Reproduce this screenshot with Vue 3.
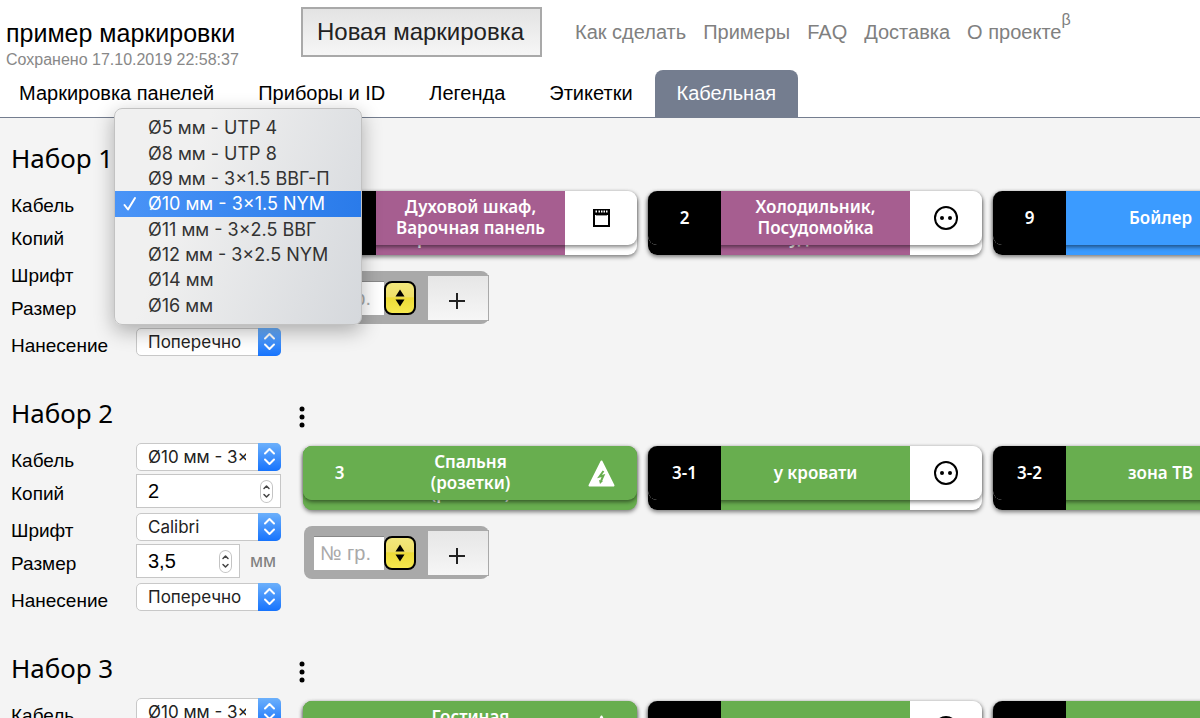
<script setup>
import { ref } from 'vue'

const pages = ['Как сделать', 'Примеры', 'FAQ', 'Доставка', 'О проекте']
const tabs = ['Маркировка панелей', 'Приборы и ID', 'Легенда', 'Этикетки', 'Кабельная']
const activeTab = ref('Кабельная')

const cables = [
  'Ø5 мм - UTP 4',
  'Ø8 мм - UTP 8',
  'Ø9 мм - 3×1.5 ВВГ-П',
  'Ø10 мм - 3×1.5 NYM',
  'Ø11 мм - 3×2.5 ВВГ',
  'Ø12 мм - 3×2.5 NYM',
  'Ø14 мм',
  'Ø16 мм',
]
const fonts = ['Calibri', 'Arial']
const directions = ['Поперечно', 'Вдоль']

const makeSet = (id, cards, menuOpen = false) => ({
  id,
  cards,
  menuOpen,
  cable: cables[3],
  copies: '2',
  font: 'Calibri',
  size: '3,5',
  direction: 'Поперечно',
})

const sets = ref([
  makeSet(1, [
    { num: '', lines: ['Духовой шкаф,', 'Варочная панель'], color: 'purple', icon: 'oven' },
    { num: '2', lines: ['Холодильник,', 'Посудомойка'], color: 'purple', icon: 'socket' },
    { num: '9', lines: ['Бойлер'], color: 'blue', icon: 'socket' },
  ], true),
  makeSet(2, [
    { num: '3', lines: ['Спальня', '(розетки)'], color: 'green', icon: 'danger', solid: true },
    { num: '3-1', lines: ['у кровати'], color: 'green', icon: 'socket' },
    { num: '3-2', lines: ['зона ТВ'], color: 'green', icon: 'socket' },
  ]),
  makeSet(3, [
    { num: '', lines: ['Гостиная', ''], color: 'green', icon: 'danger', solid: true },
    { num: '', lines: [''], color: 'green', icon: 'socket' },
    { num: '', lines: [''], color: 'green', icon: 'socket' },
  ]),
])

function pickCable(set, cable) {
  set.cable = cable
  set.menuOpen = false
}
</script>

<template>
  <div class="app">
    <header class="header">
      <div class="top">
        <div class="project">
          <h1>пример маркировки</h1>
          <p>Сохранено 17.10.2019 22:58:37</p>
        </div>
        <button class="new-button" type="button">Новая маркировка</button>
        <nav class="pages">
          <a v-for="page in pages" :key="page" href="#">{{ page }}</a>
          <sup>β</sup>
        </nav>
      </div>
      <nav class="tabs">
        <a
          v-for="tab in tabs"
          :key="tab"
          href="#"
          :class="{ active: tab === activeTab }"
          @click.prevent="activeTab = tab"
        >{{ tab }}</a>
      </nav>
    </header>

    <main>
      <section v-for="set in sets" :key="set.id" class="set">
        <div class="settings">
          <h2>Набор {{ set.id }}</h2>

          <div class="row">
            <label :for="`cable-${set.id}`">Кабель</label>
            <div class="select">
              <select :id="`cable-${set.id}`" v-model="set.cable">
                <option v-for="c in cables" :key="c">{{ c }}</option>
              </select>
              <span class="arrows"><svg viewBox="0 0 23 28"><path d="M7 10.500 L11.500 6 L16 10.500 M7 16.500 L11.500 21 L16 16.500" /></svg></span>
            </div>
            <ul v-if="set.menuOpen" class="menu" role="listbox" aria-label="Кабель">
              <li
                v-for="c in cables"
                :key="c"
                role="option"
                :aria-selected="c === set.cable"
                :class="{ chosen: c === set.cable }"
                @click="pickCable(set, c)"
              >
                <svg v-if="c === set.cable" class="check" viewBox="0 0 14 16"><path d="M1.500 9 L5 13.500 L12 2" /></svg>
                {{ c }}
              </li>
            </ul>
          </div>

          <div class="row tall">
            <label :for="`copies-${set.id}`">Копий</label>
            <div class="number">
              <input :id="`copies-${set.id}`" v-model="set.copies" type="text" inputmode="numeric">
              <span class="stepper"><svg viewBox="0 0 13 23"><path d="M4 8.500 L6.500 6 L9 8.500 M4 14.500 L6.500 17 L9 14.500" /></svg></span>
            </div>
          </div>

          <div class="row">
            <label :for="`font-${set.id}`">Шрифт</label>
            <div class="select">
              <select :id="`font-${set.id}`" v-model="set.font">
                <option v-for="f in fonts" :key="f">{{ f }}</option>
              </select>
              <span class="arrows"><svg viewBox="0 0 23 28"><path d="M7 10.500 L11.500 6 L16 10.500 M7 16.500 L11.500 21 L16 16.500" /></svg></span>
            </div>
          </div>

          <div class="row tall">
            <label :for="`size-${set.id}`">Размер</label>
            <div class="number short">
              <input :id="`size-${set.id}`" v-model="set.size" type="text" inputmode="decimal">
              <span class="stepper"><svg viewBox="0 0 13 23"><path d="M4 8.500 L6.500 6 L9 8.500 M4 14.500 L6.500 17 L9 14.500" /></svg></span>
            </div>
            <span class="unit">мм</span>
          </div>

          <div class="row">
            <label :for="`dir-${set.id}`">Нанесение</label>
            <div class="select">
              <select :id="`dir-${set.id}`" v-model="set.direction">
                <option v-for="d in directions" :key="d">{{ d }}</option>
              </select>
              <span class="arrows"><svg viewBox="0 0 23 28"><path d="M7 10.500 L11.500 6 L16 10.500 M7 16.500 L11.500 21 L16 16.500" /></svg></span>
            </div>
          </div>
        </div>

        <div class="content">
          <button class="more" type="button" aria-label="Ещё">
            <svg viewBox="0 0 6 24"><circle cx="3" cy="4" r="2.500" /><circle cx="3" cy="12" r="2.500" /><circle cx="3" cy="20" r="2.500" /></svg>
          </button>

          <div class="cards">
            <article v-for="(card, i) in set.cards" :key="i" class="card">
              <div class="layer back" :class="[card.color, { solid: card.solid }]" aria-hidden="true">
                <div class="num"></div>
                <div class="name">
                  <template v-if="card.lines.length > 1">
                    <span v-for="line in card.lines" :key="line">{{ line }}</span>
                  </template>
                </div>
                <div class="icon"></div>
              </div>
              <div class="layer front" :class="[card.color, { solid: card.solid }]">
                <div class="num">{{ card.num }}</div>
                <div class="name"><span v-for="line in card.lines" :key="line">{{ line }}</span></div>
                <div class="icon">
                  <svg v-if="card.icon === 'oven'" class="oven" viewBox="0 0 17 18">
                    <path fill-rule="evenodd" d="M0 0H17V18H0Z M2 6V16H15V6Z" />
                    <path class="light" d="M2.500 1.500h1.500v2h-1.500z M5.500 1.500h1.500v2h-1.500z M8 1.500h1.500v2h-1.500z M10.500 1.500h1.500v2h-1.500z M13 1.500h1.500v2h-1.500z" />
                    <path class="handle" d="M3 6h11v1h-11z" />
                  </svg>
                  <svg v-else-if="card.icon === 'socket'" class="socket" viewBox="0 0 24 24">
                    <circle class="ring" cx="12" cy="12" r="11" />
                    <circle cx="8" cy="12" r="2" /><circle cx="16" cy="12" r="2" />
                  </svg>
                  <svg v-else class="danger" viewBox="0 0 27 27">
                    <path class="light" d="M13.500 1.500 L25.500 25.500 H1.500 Z" stroke="#fff" stroke-width="2" stroke-linejoin="round" />
                    <path class="bolt" d="M15.500 11 L11.500 16.500 L15.500 15.500 L13 21" />
                    <path class="tip" d="M11 20 L12 24 L15 21 Z" />
                  </svg>
                </div>
              </div>
            </article>
          </div>

          <form class="add" @submit.prevent>
            <input type="text" placeholder="№ гр." aria-label="№ гр.">
            <button class="picker" type="button" aria-label="Выбрать группу">
              <svg viewBox="0 0 10 18"><path d="M5 0.500 L9.500 7.500 H0.500 Z M5 17.500 L9.500 10.500 H0.500 Z" /></svg>
            </button>
            <button class="plus" type="submit" aria-label="Добавить">
              <svg viewBox="0 0 18 18"><path d="M9 1 V17 M1 9 H17" /></svg>
            </button>
          </form>
        </div>
      </section>
    </main>
  </div>
</template>

<style>
body {
  margin: 0;
  background: #f4f4f4;
}
</style>

<style scoped>
* {
  box-sizing: border-box;
}
.app {
  height: 100vh;
  overflow: hidden;
  background: #f4f4f4;
  color: #000;
  font-family: "Liberation Sans", Arial, sans-serif;
}
h1, h2, p, ul {
  margin: 0;
  padding: 0;
  font-weight: 400;
}
a {
  text-decoration: none;
}
svg {
  display: block;
}

/* header */
.header {
  background: #fff;
  border-bottom: 1px solid #747d8f;
}
.top {
  display: flex;
  align-items: flex-start;
  height: 70px;
  padding-left: 6px;
}
.project {
  width: 295px;
  padding-top: 18px;
}
.project h1 {
  font-size: 25px;
  line-height: 30px;
}
.project p {
  color: #888;
  font-size: 16px;
  line-height: 24px;
}
.new-button {
  height: 50px;
  margin: 7px 33px 0 0;
  padding: 0 15px 0 13px;
  border: 2px solid #a9a9a9;
  background: linear-gradient(#e3e3e3, #f6f6f6);
  color: #222;
  font-family: inherit;
  font-size: 24px;
  min-width: 241px;
  white-space: nowrap;
}
.pages {
  display: flex;
  padding-top: 20px;
  font-size: 20px;
  line-height: 24px;
  white-space: nowrap;
}
.pages a {
  margin-right: 17px;
  color: #808080;
}
.pages a:last-of-type {
  margin-right: 0;
}
.pages sup {
  margin-top: -12px;
  color: #808080;
  font-size: 16px;
}
.tabs {
  display: flex;
  height: 47px;
  margin-left: -3px;
}
.tabs a {
  padding: 0 22px;
  border-radius: 8px 8px 0 0;
  color: #000;
  font-size: 20px;
  line-height: 47px;
  white-space: nowrap;
}
.tabs .active {
  background: #747d8f;
  color: #fff;
}

/* set */
.set {
  display: flex;
  height: 255px;
}
.settings {
  flex: none;
  width: 303px;
  padding-left: 11px;
}
h2 {
  height: 70px;
  padding-top: 22px;
  font-family: "Noto Sans", "Open Sans", sans-serif;
  font-size: 26px;
  line-height: 36px;
}
.row {
  position: relative;
  display: flex;
  align-items: flex-start;
  height: 31px;
}
.row.tall {
  height: 39px;
}
label {
  width: 125px;
  font-size: 19px;
  line-height: 35px;
}
.tall label {
  line-height: 39px;
}
.select {
  position: relative;
  width: 145px;
  height: 28px;
}
select {
  display: block;
  width: 100%;
  height: 100%;
  padding: 0 34px 0 11px;
  border: 1px solid #c8c8c8;
  border-radius: 5px;
  background: #fff;
  color: #222;
  font-family: Inter, sans-serif;
  font-size: 17px;
  appearance: none;
}
.arrows {
  position: absolute;
  top: 0;
  right: 0;
  width: 23px;
  height: 28px;
  border-radius: 0 5px 5px 0;
  background: linear-gradient(#6cb0fb, #1673fd);
  pointer-events: none;
}
.arrows path {
  fill: none;
  stroke: #fff;
  stroke-width: 2;
  stroke-linecap: round;
  stroke-linejoin: round;
}
.number {
  position: relative;
  width: 145px;
  height: 34px;
}
.number.short {
  width: 104px;
}
.number input {
  display: block;
  width: 100%;
  height: 100%;
  padding: 0 30px 0 11px;
  border: 1px solid #c6c6c6;
  background: #fff;
  color: #000;
  font-family: inherit;
  font-size: 20px;
}
.stepper {
  position: absolute;
  top: 6px;
  right: 8px;
  width: 13px;
  height: 23px;
  border-radius: 7px;
  background: #fff;
  box-shadow: inset 0 0 0 1px #c4c4c4;
}
.stepper path {
  fill: none;
  stroke: #444;
  stroke-width: 1.5;
  stroke-linecap: round;
  stroke-linejoin: round;
}
.unit {
  margin-left: 10px;
  color: #808080;
  font-size: 19px;
  line-height: 34px;
}

/* cable menu */
.menu {
  position: absolute;
  z-index: 5;
  top: -80px;
  left: 103px;
  display: grid;
  grid-template-rows: repeat(8, 1fr);
  width: 248px;
  height: 217px;
  padding: 6px 0;
  border: 1px solid #c2c2c2;
  border-radius: 8px;
  background: linear-gradient(110deg, #f0f0f0 30%, #d5d8dc);
  box-shadow: 0 6px 20px rgba(0, 0, 0, 0.3);
  list-style: none;
}
.menu li {
  position: relative;
  display: flex;
  align-items: center;
  padding-left: 33px;
  color: #333;
  font-family: Inter, sans-serif;
  font-size: 18px;
  line-height: 25px;
  white-space: nowrap;
}
.menu .chosen {
  background: linear-gradient(90deg, #4a94f7, #2a7bea);
  color: #fff;
}
.check {
  position: absolute;
  left: 8px;
  width: 14px;
  height: 16px;
}
.check path {
  fill: none;
  stroke: #fff;
  stroke-width: 2;
  stroke-linecap: round;
  stroke-linejoin: round;
}

/* cards */
.content {
  flex: 1;
  min-width: 0;
}
.more {
  display: block;
  width: 6px;
  height: 24px;
  margin: 32px 0 17px -4px;
  padding: 0;
  border: 0;
  background: none;
}
.cards {
  display: flex;
  gap: 11px;
}
.card {
  position: relative;
  flex: none;
  width: 334px;
  height: 64px;
}
.layer {
  display: flex;
  overflow: hidden;
  border-radius: 9px;
  background: #fff;
  box-shadow: 0 2px 4px rgba(0, 0, 0, 0.5);
  color: #fff;
  font-family: "Noto Sans", "Open Sans", sans-serif;
  font-size: 17px;
  font-weight: 600;
  line-height: 21px;
}
.back {
  height: 64px;
}
.back .name {
  padding-top: 10px;
}
.front {
  position: absolute;
  inset: 0 0 10px;
}
.num,
.name,
.icon {
  display: flex;
  flex-direction: column;
  align-items: center;
  justify-content: center;
}
.num {
  width: 73px;
  padding-bottom: 2px;
  background: #000;
}
.name {
  flex: 1;
  padding-bottom: 2px;
}
.name span {
  min-height: 21px;
  white-space: nowrap;
}
.icon {
  width: 72px;
}
.purple .name {
  background: #a65e90;
}
.blue .name {
  background: #3b9bff;
}
.green .name,
.solid,
.solid .num {
  background: #68ae4f;
}
.oven {
  width: 17px;
  height: 18px;
}
.handle {
  fill: #999;
}
.socket {
  width: 24px;
  height: 24px;
}
.ring {
  fill: none;
  stroke: #000;
  stroke-width: 2;
}
.danger {
  width: 27px;
  height: 27px;
}
.light {
  fill: #fff;
}
.bolt {
  fill: none;
  stroke: #68ae4f;
  stroke-width: 2;
}
.tip {
  fill: #68ae4f;
}

/* add form */
.add {
  display: flex;
  align-items: center;
  width: 185px;
  height: 53px;
  margin: 16px 0 0 1px;
  padding-left: 10px;
  border-radius: 8px;
  background: #a9a9a9;
}
.add input {
  width: 70px;
  height: 34px;
  padding: 0 6px;
  border: 0;
  border-top: 1px solid #888;
  background: #fff;
  font-family: inherit;
  font-size: 20px;
}
.add input::placeholder {
  color: #a9a9a9;
  opacity: 1;
}
.picker,
.plus {
  display: flex;
  align-items: center;
  justify-content: center;
  padding: 0;
}
.picker {
  width: 32px;
  height: 34px;
  border: 2px solid #000;
  border-radius: 8px;
  background: linear-gradient(#f2e77c, #efe06a 45%, #eddb38 50%, #f6e84e);
}
.picker svg {
  width: 10px;
  height: 18px;
}
.plus {
  width: 62px;
  height: 46px;
  margin-left: 11px;
  border: 1px solid #a9a9a9;
  background: linear-gradient(#e6e6e6, #f6f6f6);
}
.plus svg {
  width: 18px;
  height: 18px;
  margin: 6px 2px 0 0;
}
.plus path {
  stroke: #222;
  stroke-width: 2;
}
</style>
